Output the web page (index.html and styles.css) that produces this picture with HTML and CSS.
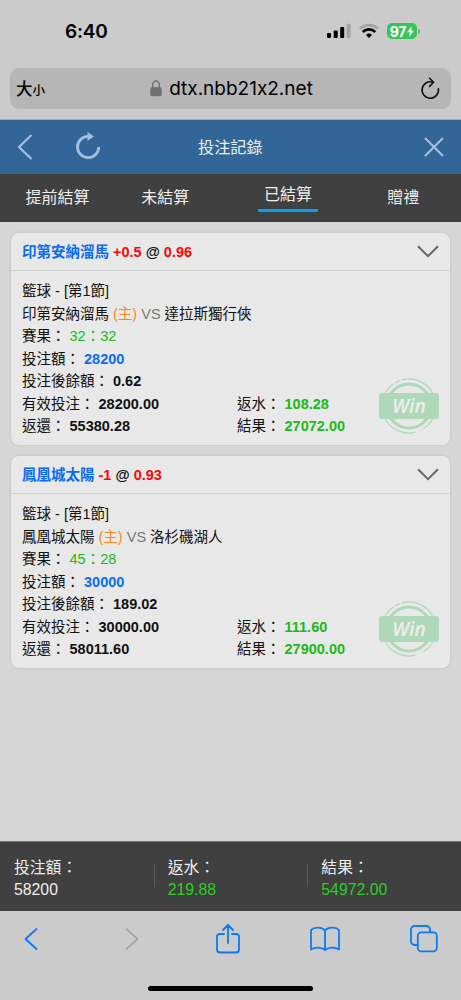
FILE: index.html
```html
<!DOCTYPE html>
<html lang="zh-Hant">
<head>
  <meta charset="UTF-8" />
  <meta name="viewport" content="width=device-width, initial-scale=1.0" />
  <title>投注記錄</title>
  <link rel="stylesheet" href="styles.css">
</head>
<body>
  <div class="status-bar">
    <span class="time">6:40</span>
    <div class="status-icons">
      <svg class="signal" width="24" height="16" viewBox="0 0 24 16">
        <rect x="0" y="10" width="4" height="5" rx="1" />
        <rect x="6.7" y="7.5" width="4" height="7.5" rx="1" />
        <rect x="13.2" y="4" width="4" height="11" rx="1" />
        <rect x="19.6" y="0.8" width="4" height="14.2" rx="1" fill="#a3a3a3" />
      </svg>
      <svg class="wifi" width="20" height="16" viewBox="0 0 20 16" fill="none" stroke-width="2.7">
        <path d="M1 5.7a13 13 0 0 1 18 0" stroke="#a3a3a3" />
        <path d="M3.800 9a8.800 8.800 0 0 1 12.400 0" stroke="#000" />
        <path d="M10 15L7 12a4.300 4.300 0 0 1 6 0z" fill="#000" />
      </svg>
      <div class="battery">
        <span>97</span>
        <svg width="7" height="11" viewBox="0 0 7 11"><path d="M5 0L0 6.2h3L2 11l5-6.4H4z" fill="#fff" /></svg>
      </div>
      <i class="battery-cap"></i>
    </div>
  </div>

  <div class="address-bar">
    <div class="address">
      <span class="text-size">大<small>小</small></span>
      <div class="url">
        <svg width="12" height="17" viewBox="0 0 12 17">
          <path d="M2.7 8V4.6a3.3 3.6 0 0 1 6.6 0V8" fill="none" stroke="#6e6e73" stroke-width="1.3" />
          <rect x="0.3" y="7.2" width="11.4" height="9" rx="1.6" fill="#6e6e73" />
        </svg>
        <span>dtx.nbb21x2.net</span>
      </div>
      <svg class="reload" width="20" height="24" viewBox="0 0 20 24" fill="none" stroke="#111" stroke-width="1.6" stroke-linecap="round" stroke-linejoin="round">
        <path d="M12.8 5.2A8.2 8.2 0 1 0 18.4 11.8" />
        <path d="M9.600 1.200l4 4-4 4.200" />
      </svg>
    </div>
  </div>

  <header>
    <svg width="16" height="28" viewBox="0 0 16 28" fill="none" stroke="#a6c0dc" stroke-width="2.2"><path d="M14.5 2L2 14l12.500 12" /></svg>
    <svg class="refresh" width="26" height="28" viewBox="0 0 26 28">
      <path d="M13 3.400A10.600 10.600 0 1 0 23.700 14" fill="none" stroke="#a6c0dc" stroke-width="2.800" />
      <path d="M12.500 -1l6.500 4.400-6.500 4.600z" fill="#a6c0dc" />
    </svg>
    <h1>投注記錄</h1>
    <svg width="20" height="20" viewBox="0 0 20 20" fill="none" stroke="#a6c0dc" stroke-width="2.1"><path d="M1 1l18 18M19 1L1 19" /></svg>
  </header>

  <nav class="tabs">
    <a>提前結算</a>
    <a class="pending">未結算</a>
    <a class="active">已結算</a>
    <a>贈禮</a>
  </nav>

  <main>
    <div class="card">
      <div class="card-head">
        <p><span class="blue">印第安納溜馬</span> <span class="red">+0.5</span> @ <span class="red">0.96</span></p>
        <svg width="22" height="13" viewBox="0 0 22 13" fill="none" stroke="#666" stroke-width="2"><path d="M1 1.200l10 10 10-10" /></svg>
      </div>
      <div class="card-body">
        <p>籃球 - [第1節]</p>
        <p>印第安納溜馬 <span class="home">(主)</span> <span class="vs">VS</span> 達拉斯獨行俠</p>
        <p>賽果： <span class="green">32：32</span></p>
        <p>投注額： <b class="blue">28200</b></p>
        <p>投注後餘額： <b>0.62</b></p>
        <div class="row"><p>有效投注： <b>28200.00</b></p><p>返水： <b class="green">108.28</b></p></div>
        <div class="row"><p>返還： <b>55380.28</b></p><p>結果： <b class="green">27072.00</b></p></div>
      </div>
      <div class="stamp">
        <svg width="62" height="58" viewBox="0 0 62 58" fill="none" stroke="#aed8b7">
          <circle cx="31" cy="29" r="22" stroke-width="3" />
          <path d="M7.500 15.500a27 27 0 0 1 8-8.800M17 5.800l4.500-2.200M24 2.900a27 27 0 0 1 31 14M54.500 42.500a27 27 0 0 1-9 9.300M37.500 55.200A27 27 0 0 1 7.500 42.500" stroke-width="1.200" />
        </svg>
        <span>Win</span>
      </div>
    </div>

    <div class="card">
      <div class="card-head">
        <p><span class="blue">鳳凰城太陽</span> <span class="red">-1</span> @ <span class="red">0.93</span></p>
        <svg width="22" height="13" viewBox="0 0 22 13" fill="none" stroke="#666" stroke-width="2"><path d="M1 1.200l10 10 10-10" /></svg>
      </div>
      <div class="card-body">
        <p>籃球 - [第1節]</p>
        <p>鳳凰城太陽 <span class="home">(主)</span> <span class="vs">VS</span> 洛杉磯湖人</p>
        <p>賽果： <span class="green">45：28</span></p>
        <p>投注額： <b class="blue">30000</b></p>
        <p>投注後餘額： <b>189.02</b></p>
        <div class="row"><p>有效投注： <b>30000.00</b></p><p>返水： <b class="green">111.60</b></p></div>
        <div class="row"><p>返還： <b>58011.60</b></p><p>結果： <b class="green">27900.00</b></p></div>
      </div>
      <div class="stamp">
        <svg width="62" height="58" viewBox="0 0 62 58" fill="none" stroke="#aed8b7">
          <circle cx="31" cy="29" r="22" stroke-width="3" />
          <path d="M7.500 15.500a27 27 0 0 1 8-8.800M17 5.800l4.500-2.200M24 2.900a27 27 0 0 1 31 14M54.500 42.500a27 27 0 0 1-9 9.300M37.500 55.200A27 27 0 0 1 7.500 42.500" stroke-width="1.200" />
        </svg>
        <span>Win</span>
      </div>
    </div>
  </main>

  <footer>
    <div class="total"><p>投注額：</p><p>58200</p></div>
    <div class="total"><p>返水：</p><p class="lime">219.88</p></div>
    <div class="total"><p>結果：</p><p class="lime">54972.00</p></div>
  </footer>

  <div class="toolbar">
    <div class="tools">
      <svg width="14" height="24" viewBox="0 0 14 24"><path d="M12.500 2L1.500 12l11 10" /></svg>
      <svg class="disabled" width="14" height="24" viewBox="0 0 14 24"><path d="M1.500 2l11 10-11 10" /></svg>
      <svg class="share" width="24" height="30" viewBox="0 0 24 30">
        <path d="M8 10H4a3 3 0 0 0-3 3v12.500a3 3 0 0 0 3 3h16a3 3 0 0 0 3-3V13a3 3 0 0 0-3-3h-4M12 19V1.500M7 6l5-5 5 5" />
      </svg>
      <svg width="30" height="26" viewBox="0 0 30 26">
        <path d="M15 4.500C12.500 1.200 4.500.2 1 4v19.500c3.500-2.600 10.500-2.600 14 .5 3.500-3.100 10.500-3.100 14-.5V4C25.500.2 17.500 1.200 15 4.500zM15 4.500V24" />
      </svg>
      <svg width="28" height="28" viewBox="0 0 28 28">
        <rect x="7.800" y="7.300" width="19" height="19" rx="3.500" />
        <path d="M7.800 20H4.500A3.500 3.500 0 0 1 1 16.500v-12A3.500 3.500 0 0 1 4.500 1h12A3.500 3.500 0 0 1 20 4.500v2.800" />
      </svg>
    </div>
    <div class="home-bar"></div>
  </div>
</body>
</html>
```

FILE: styles.css
```css
* {
  box-sizing: border-box;
}
body {
  font-family: "Liberation Sans", "Noto Sans CJK TC", sans-serif;
  margin: 0;
  height: 1000px;
  display: flex;
  flex-direction: column;
  overflow: hidden;
  background: #d6d6d6;
  color: #111;
}
p, h1 {
  margin: 0;
}
svg {
  display: block;
  flex-shrink: 0;
  overflow: visible;
}
.status-bar {
  height: 68px;
  padding: 0 41px 6px 65px;
  display: flex;
  align-items: center;
  justify-content: space-between;
  background: #cbcbcb;
  color: #000;
}
.time {
  font-family: Inter, sans-serif;
  font-size: 19px;
  font-weight: 600;
  letter-spacing: -0.2px;
}
.status-icons {
  display: flex;
  align-items: center;
}
.wifi {
  margin: 0 8px 0 8px;
}
.battery {
  width: 30px;
  height: 16px;
  border-radius: 5px;
  background: #34c759;
  color: white;
  display: flex;
  align-items: center;
  justify-content: center;
  gap: 1px;
  font-family: Inter, sans-serif;
  font-size: 14px;
  font-weight: 700;
  letter-spacing: -0.3px;
}
.battery-cap {
  width: 2px;
  height: 5px;
  margin-left: 1px;
  border-radius: 0 2px 2px 0;
  background: #999;
}
.address-bar {
  height: 52px;
  padding: 0 10px;
  background: #cbcbcb;
  border-bottom: 1px solid #aaa;
}
.address {
  height: 41px;
  padding: 0 11px 0 6px;
  display: flex;
  align-items: center;
  justify-content: space-between;
  border-radius: 9px;
  background: #b6b6b6;
  color: #000;
}
.text-size {
  width: 30px;
  padding-bottom: 2px;
  font-family: "Noto Sans CJK TC", sans-serif;
  font-size: 16.5px;
  font-weight: 500;
  white-space: nowrap;
}
.text-size small {
  font-size: 12.5px;
}
.url {
  margin-right: 3px;
  display: flex;
  align-items: center;
  gap: 7px;
  font-family: Inter, sans-serif;
  font-size: 19px;
  font-feature-settings: "calt" 0;
}
header {
  height: 54px;
  padding: 0 17px;
  display: flex;
  align-items: center;
  background: #326698;
  color: #eee;
}
.refresh {
  margin-left: 42px;
}
header h1 {
  margin: 0 auto 0 97px;
  padding-bottom: 3px;
  font-size: 16.2px;
  font-weight: normal;
}
.tabs {
  height: 48px;
  display: grid;
  grid-template-columns: repeat(4, 1fr);
  justify-items: center;
  background: #404040;
  color: #eee;
  font-size: 16px;
}
.tabs a {
  line-height: 48px;
}
.tabs .pending {
  margin-right: 15px;
}
.tabs .active {
  width: 60px;
  height: 38px;
  line-height: 41px;
  text-align: center;
  border-bottom: 3px solid #00a2f2;
  border-radius: 1px;
}
main {
  flex: 1;
  padding: 11px 11px 0;
}
.card {
  position: relative;
  height: 212px;
  margin-bottom: 11px;
  border-radius: 8px;
  background: #e8e8e8;
  box-shadow: 0 0 3px rgba(0,0,0,0.12);
  font-size: 14.5px;
}
.card-head {
  height: 38px;
  padding: 0 11px;
  display: flex;
  align-items: center;
  justify-content: space-between;
  border-bottom: 1px solid #d2d2d2;
  font-weight: bold;
}
.card-head p {
  padding-bottom: 2px;
}
.card-body {
  padding: 9px 11px;
  line-height: 22.5px;
}
.row {
  display: grid;
  grid-template-columns: 215px 1fr;
}
.blue {
  color: #0b6bf0;
}
.red {
  color: #fa0505;
}
.green {
  color: #20b81b;
}
.home {
  color: #f98b12;
}
.vs {
  color: #777;
}
.stamp {
  position: absolute;
  right: 10px;
  bottom: 10px;
  width: 62px;
  height: 58px;
}
.stamp span {
  position: absolute;
  left: 1px;
  top: 16px;
  width: 60px;
  height: 26px;
  line-height: 26px;
  border-radius: 3px;
  background: #aed8b7;
  color: #ececec;
  font-family: "Noto Sans", "Open Sans", sans-serif;
  font-size: 19px;
  font-weight: 600;
  font-style: italic;
  text-align: center;
}
footer {
  height: 70px;
  display: grid;
  grid-template-columns: repeat(3, 1fr);
  align-items: center;
  background: #404040;
  border-top: 1px solid #777;
  color: #eee;
  font-size: 15.8px;
}
.total {
  padding: 5px 0 0 14px;
  line-height: 22px;
  background: linear-gradient(#5a5a5a, #5a5a5a) no-repeat 0 12px / 1px 23px;
}
.total:first-child {
  background: none;
}
.lime {
  color: #2bd01f;
}
.toolbar {
  height: 89px;
  display: flex;
  flex-direction: column;
  align-items: center;
  background: #cbcbcb;
}
.tools {
  width: 100%;
  height: 56px;
  padding: 0 24px;
  display: flex;
  align-items: center;
}
.tools svg {
  margin-right: 70px;
  fill: none;
  stroke: #087bf5;
  stroke-width: 1.8;
  stroke-linecap: round;
  stroke-linejoin: round;
}
.tools svg:first-child {
  margin-right: 87px;
}
.tools .disabled {
  margin-right: 77px;
  stroke: #a5a5a5;
}
.tools svg:last-child {
  margin-right: 0;
}
.home-bar {
  width: 165px;
  height: 5px;
  margin-top: 19px;
  border-radius: 3px;
  background: #000;
}
```
